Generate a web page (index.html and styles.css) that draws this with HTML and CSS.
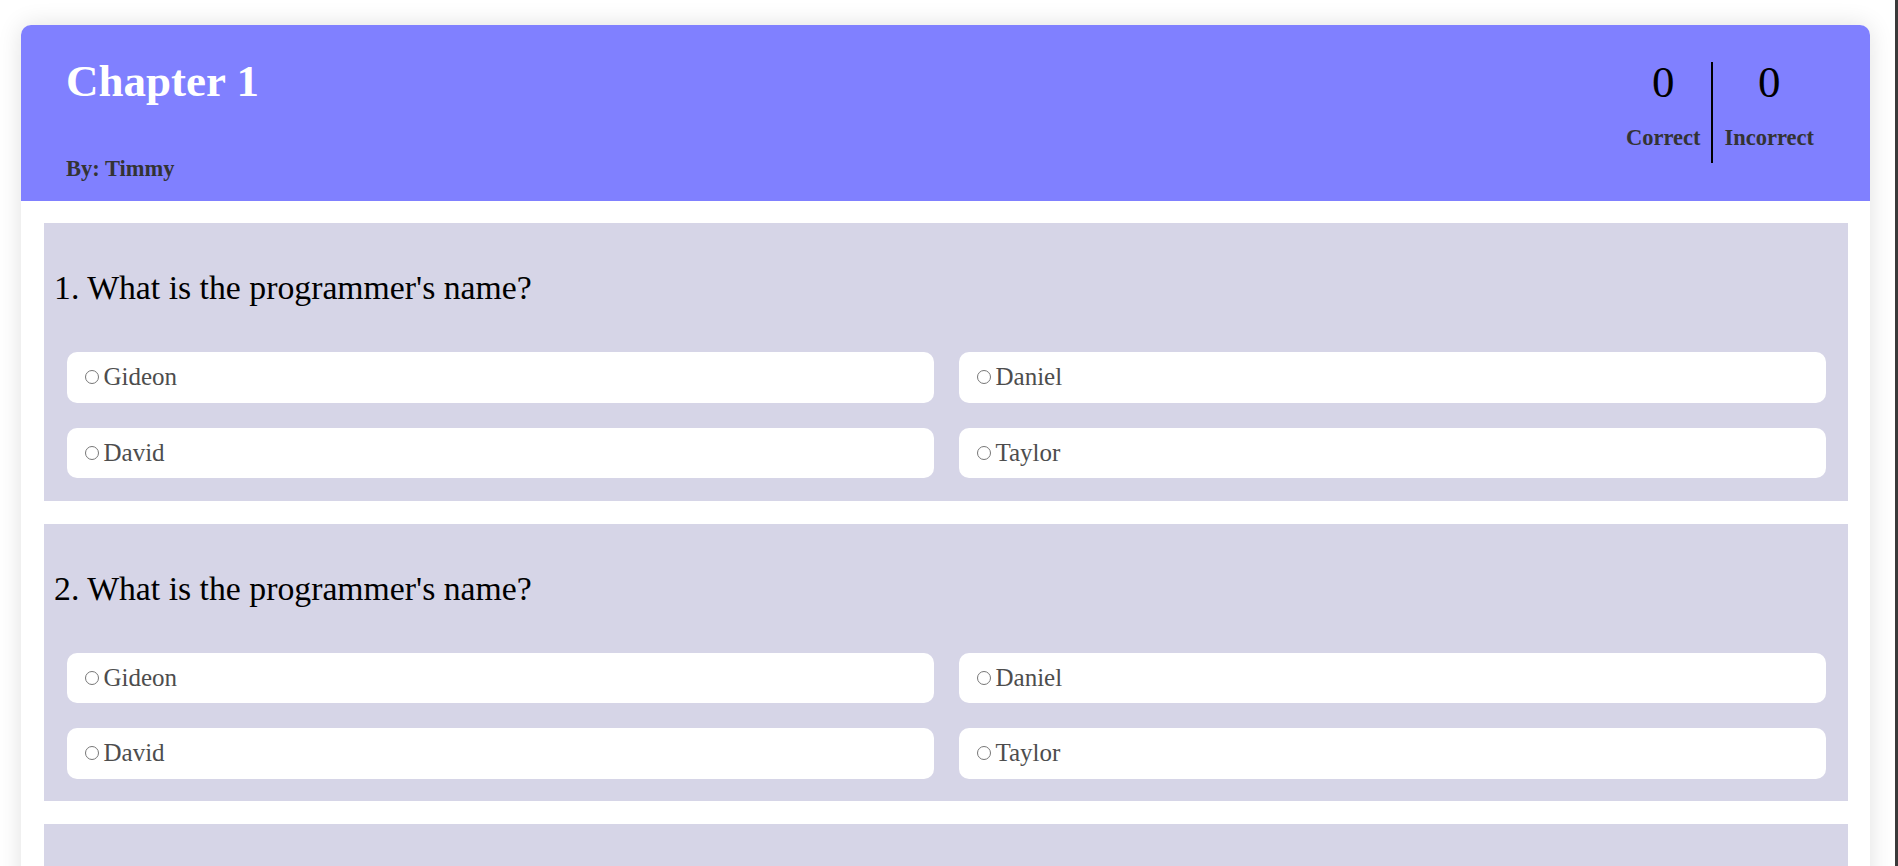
FILE: index.html
```html
<!DOCTYPE html>
<html lang="en">
<head>
<meta charset="utf-8">
<title>Chapter 1 Quiz</title>
<link rel="stylesheet" href="styles.css">
</head>
<body>
<div class="page">
  <div class="card">
    <header class="header">
      <div class="title-col">
        <h1 class="title">Chapter 1</h1>
        <p class="author">By: Timmy</p>
      </div>
      <div class="stats">
        <div class="stat stat-correct">
          <div class="stat-num">0</div>
          <div class="stat-label">Correct</div>
        </div>
        <div class="stat">
          <div class="stat-num">0</div>
          <div class="stat-label">Incorrect</div>
        </div>
      </div>
    </header>
    <main class="questions">
      <section class="question">
        <h2 class="q-text">1. What is the programmer's name?</h2>
        <div class="options">
          <label class="option"><span class="radio"></span><span class="opt-text">Gideon</span></label>
          <label class="option"><span class="radio"></span><span class="opt-text">Daniel</span></label>
          <label class="option"><span class="radio"></span><span class="opt-text">David</span></label>
          <label class="option"><span class="radio"></span><span class="opt-text">Taylor</span></label>
        </div>
      </section>
      <section class="question">
        <h2 class="q-text">2. What is the programmer's name?</h2>
        <div class="options">
          <label class="option"><span class="radio"></span><span class="opt-text">Gideon</span></label>
          <label class="option"><span class="radio"></span><span class="opt-text">Daniel</span></label>
          <label class="option"><span class="radio"></span><span class="opt-text">David</span></label>
          <label class="option"><span class="radio"></span><span class="opt-text">Taylor</span></label>
        </div>
      </section>
      <section class="question">
        <h2 class="q-text">3. What is the programmer's name?</h2>
        <div class="options">
          <label class="option"><span class="radio"></span><span class="opt-text">Gideon</span></label>
          <label class="option"><span class="radio"></span><span class="opt-text">Daniel</span></label>
          <label class="option"><span class="radio"></span><span class="opt-text">David</span></label>
          <label class="option"><span class="radio"></span><span class="opt-text">Taylor</span></label>
        </div>
      </section>
    </main>
  </div>
</div>
<div class="scrollbar"></div>
</body>
</html>
```
FILE: styles.css
```css
html, body {
  margin: 0;
  background: #ffffff;
}

body {
  font-family: "Liberation Serif", "Times New Roman", serif;
}

.page {
  padding: 25px 28px 0 21px;
}

.card {
  background: #ffffff;
  border-radius: 10px 10px 0 0;
  box-shadow: 0 0 24px rgba(0, 0, 0, 0.12);
}

.header {
  display: flex;
  justify-content: space-between;
  box-sizing: border-box;
  height: 176px;
  padding: 0 45px;
  background: #8080ff;
  border-radius: 10px 10px 0 0;
}

.title-col {
  display: flex;
  flex-direction: column;
  padding: 34px 0 19px;
}

.title {
  margin: 0;
  font-size: 45px;
  line-height: 45px;
  font-weight: bold;
  color: #ffffff;
}

.author {
  margin: auto 0 0;
  font-size: 22.5px;
  font-weight: bold;
  color: #333333;
}

.stats {
  display: flex;
  align-self: flex-start;
  padding-top: 36.7px;
}

.stat {
  display: flex;
  flex-direction: column;
  align-items: center;
  padding: 0 11px 11.7px;
}

.stat-correct {
  border-right: 2px solid #000000;
}

.stat-num {
  font-size: 45px;
  line-height: 40px;
  margin-bottom: 23.5px;
  color: #000000;
}

.stat-label {
  font-size: 22.5px;
  font-weight: bold;
  color: #333333;
}

.questions {
  display: flex;
  flex-direction: column;
  gap: 23px;
  padding: 22px 22px 0 23px;
}

.question {
  background: #d6d5e7;
}

.q-text {
  margin: 0;
  padding: 45px 10px;
  font-size: 33.75px;
  line-height: 39px;
  font-weight: normal;
  color: #000000;
}

.options {
  display: grid;
  grid-template-columns: 1fr 1fr;
  gap: 25px;
  padding: 0 22.5px 22.5px;
}

.option {
  display: flex;
  align-items: center;
  height: 50.5px;
  padding-left: 18px;
  background: #ffffff;
  border-radius: 10px;
  font-size: 25px;
  color: #4d4d4d;
}

.radio {
  flex: none;
  box-sizing: border-box;
  width: 14px;
  height: 14px;
  margin-right: 5px;
  border: 1px solid #777777;
  border-radius: 50%;
}

.scrollbar {
  position: fixed;
  top: 0;
  right: 0;
  width: 3px;
  height: 100vh;
  background: #3a3a3a;
}
```
